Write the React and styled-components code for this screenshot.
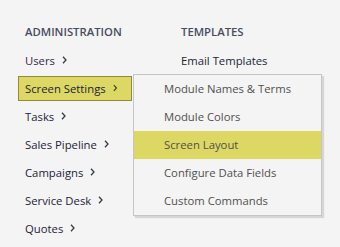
import React from "react"
import styled, { createGlobalStyle } from "styled-components"

const GlobalStyle = createGlobalStyle`
    body {
        margin: 0;
        background: #f4f4f4;
        font-family: "Open Sans", "Noto Sans", sans-serif;
    }
`

const Page = styled.div`
    display: flex;
    padding: 18px 0 0 25px;
    height: 247px;
    box-sizing: border-box;
`

const Column = styled.div`
    width: ${props => props.width || "auto"};
    display: flex;
    flex-direction: column;
`

const Heading = styled.div`
    height: 28px;
    line-height: 28px;
    font-size: 11.3px;
    font-weight: 600;
    color: #474d5e;
    text-transform: uppercase;
`

const NavRow = styled.div`
    position: relative;
    height: 28px;
    display: flex;
    align-items: center;
`

const NavLink = styled.div`
    display: flex;
    align-items: center;
    gap: 7px;
    white-space: nowrap;
    font-size: 11.3px;
    color: ${props => props.visited ? "#3a1f4c" : "#1c2238"};
    height: 25px;
    box-sizing: border-box;
    margin-left: -7px;
    padding: 0 14px 0 6px;
    border: 1px solid ${props => props.active ? "#8e8b3c" : "transparent"};
    background: ${props => props.active ? "#ddd763" : "transparent"};
    width: ${props => props.active ? "114px" : "auto"};
`

const Chevron = () => (
    <svg width="5" height="8" viewBox="0 0 5 8">
        <path d="M1 0.8 L4 4 L1 7.2" fill="none" stroke="#3a3a44" strokeWidth="1.3" />
    </svg>
)

const Dropdown = styled.div`
    position: absolute;
    left: 108px;
    top: 0;
    width: 189px;
    background: #f4f4f4;
    border: 1px solid #c6c6c6;
    box-sizing: border-box;
    box-shadow: 2px 2px 1px rgba(0, 0, 0, 0.12);
    z-index: 10;
`

const DropItem = styled.div`
    height: 28px;
    line-height: 28px;
    padding-left: 30px;
    font-size: 11.3px;
    white-space: nowrap;
    color: #505050;
    background: ${props => props.active ? "#ddd763" : "transparent"};
`

const adminItems = ["Users", "Screen Settings", "Tasks", "Sales Pipeline", "Campaigns", "Service Desk", "Quotes"]
const screenSettings = ["Module Names & Terms", "Module Colors", "Screen Layout", "Configure Data Fields", "Custom Commands"]

export default function App() {
    return (
        <>
            <GlobalStyle />
            <Page>
                <Column width="156px">
                    <Heading>Administration</Heading>
                    {adminItems.map(item => (
                        <NavRow key={item}>
                            <NavLink active={item === "Screen Settings"} visited={item === "Users"}>
                                {item}
                                <Chevron />
                            </NavLink>
                            {item === "Screen Settings" && (
                                <Dropdown>
                                    {screenSettings.map(sub => (
                                        <DropItem key={sub} active={sub === "Screen Layout"}>{sub}</DropItem>
                                    ))}
                                </Dropdown>
                            )}
                        </NavRow>
                    ))}
                </Column>
                <Column>
                    <Heading>Templates</Heading>
                    <NavRow>
                        <NavLink>Email Templates</NavLink>
                    </NavRow>
                </Column>
            </Page>
        </>
    )
}
